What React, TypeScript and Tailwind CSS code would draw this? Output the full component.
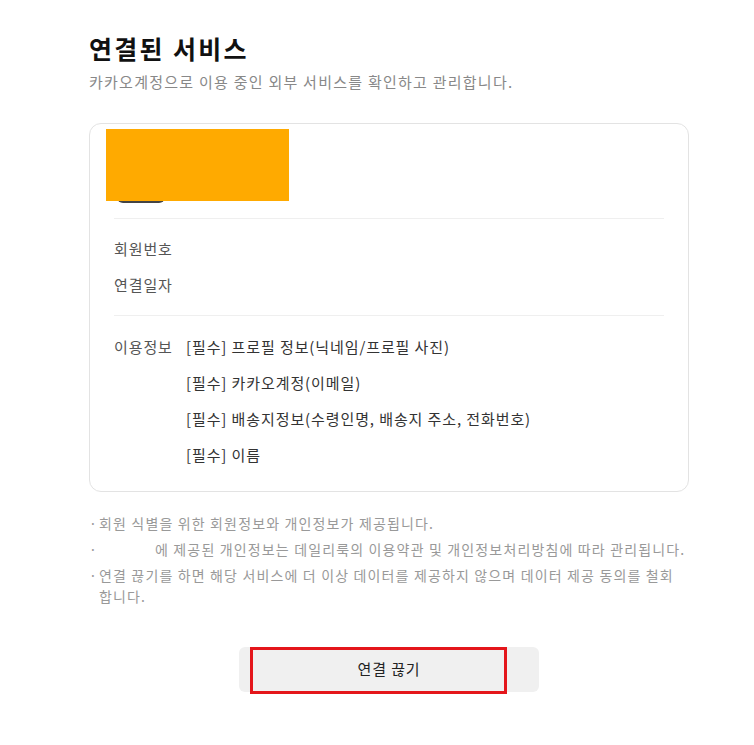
import React from "react";

const font = { fontFamily: '"Noto Sans CJK KR", "Noto Sans", sans-serif' };

const scopes = [
  "[필수] 프로필 정보(닉네임/프로필 사진)",
  "[필수] 카카오계정(이메일)",
  "[필수] 배송지정보(수령인명, 배송지 주소, 전화번호)",
  "[필수] 이름",
];

export default function App() {
  return (
    <div className="min-h-[745px] bg-white" style={font}>
      <div className="ml-[89px] w-[600px] pt-[30px] pb-10">
        <h1 className="text-[25px] font-bold leading-[36px] tracking-[2.3px] text-[#111]">연결된 서비스</h1>
        <p className="mt-[5px] text-[15px] leading-[22px] tracking-[1.25px] text-[#888]">
          카카오계정으로 이용 중인 외부 서비스를 확인하고 관리합니다.
        </p>

        <div className="mt-[30px] rounded-xl border border-[#e3e3e3] px-6 pb-[26px]">
          <div className="relative h-[95px] border-b border-[#efefef]">
            <div className="absolute left-[3px] top-[60px] h-[19px] w-[48px] rounded-b-md bg-[#444]" />
            <div className="absolute -left-2 top-[5px] h-[72px] w-[183px] bg-[#ffaa00]" />
          </div>

          <div className="flex flex-col gap-4 border-b border-[#efefef] pt-[20px] pb-[20px] text-[15px] leading-[20px] tracking-[0.9px] text-[#555]">
            <div>회원번호</div>
            <div>연결일자</div>
          </div>

          <div className="flex pt-[21px] text-[15px] leading-[20px] tracking-[0.9px]">
            <div className="w-[72px] shrink-0 text-[#555]">이용정보</div>
            <ul className="flex flex-col gap-4 text-[#333]">
              {scopes.map((s) => (
                <li key={s}>{s}</li>
              ))}
            </ul>
          </div>
        </div>

        <ul className="mt-[21px] flex flex-col gap-[5px] text-[14px] leading-[21px] tracking-[1.15px] text-[#999]">
          <li className="flex">
            <span className="w-[10px] shrink-0">·</span>
            <span>회원 식별을 위한 회원정보와 개인정보가 제공됩니다.</span>
          </li>
          <li className="flex">
            <span className="w-[10px] shrink-0">·</span>
            <span>
              <span className="inline-block w-[56px]" />에 제공된 개인정보는 데일리룩의 이용약관 및 개인정보처리방침에 따라 관리됩니다.
            </span>
          </li>
          <li className="flex">
            <span className="w-[10px] shrink-0">·</span>
            <span>
              연결 끊기를 하면 해당 서비스에 더 이상 데이터를 제공하지 않으며 데이터 제공 동의를 철회
              <br />
              합니다.
            </span>
          </li>
        </ul>

        <div className="mt-[40px] flex justify-center">
          <div className="relative">
            <button
              type="button"
              className="h-[45px] w-[300px] rounded-md bg-[#f0f0f0] text-[15px] tracking-[0.9px] text-[#222]"
            >
              연결 끊기
            </button>
            <div className="pointer-events-none absolute left-[11px] top-0 h-[47px] w-[257px] border-[3px] border-[#e4161b]" />
          </div>
        </div>
      </div>
    </div>
  );
}
